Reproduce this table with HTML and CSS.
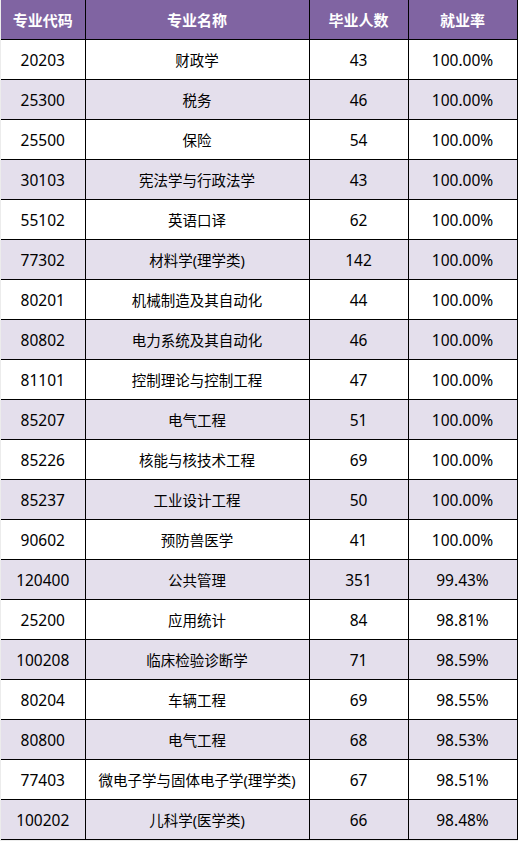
FILE: index.html
```html
<!DOCTYPE html>
<html lang="zh-CN">
<head>
<meta charset="utf-8">
<title>专业就业率</title>
<link rel="stylesheet" href="styles.css">
</head>
<body>
<table class="grid">
  <colgroup>
    <col class="c1"><col class="c2"><col class="c3"><col class="c4">
  </colgroup>
  <thead>
    <tr><th>专业代码</th><th>专业名称</th><th>毕业人数</th><th>就业率</th></tr>
  </thead>
  <tbody>
    <tr><td>20203</td><td>财政学</td><td>43</td><td>100.00%</td></tr>
    <tr><td>25300</td><td>税务</td><td>46</td><td>100.00%</td></tr>
    <tr><td>25500</td><td>保险</td><td>54</td><td>100.00%</td></tr>
    <tr><td>30103</td><td>宪法学与行政法学</td><td>43</td><td>100.00%</td></tr>
    <tr><td>55102</td><td>英语口译</td><td>62</td><td>100.00%</td></tr>
    <tr><td>77302</td><td>材料学(理学类)</td><td>142</td><td>100.00%</td></tr>
    <tr><td>80201</td><td>机械制造及其自动化</td><td>44</td><td>100.00%</td></tr>
    <tr><td>80802</td><td>电力系统及其自动化</td><td>46</td><td>100.00%</td></tr>
    <tr><td>81101</td><td>控制理论与控制工程</td><td>47</td><td>100.00%</td></tr>
    <tr><td>85207</td><td>电气工程</td><td>51</td><td>100.00%</td></tr>
    <tr><td>85226</td><td>核能与核技术工程</td><td>69</td><td>100.00%</td></tr>
    <tr><td>85237</td><td>工业设计工程</td><td>50</td><td>100.00%</td></tr>
    <tr><td>90602</td><td>预防兽医学</td><td>41</td><td>100.00%</td></tr>
    <tr><td>120400</td><td>公共管理</td><td>351</td><td>99.43%</td></tr>
    <tr><td>25200</td><td>应用统计</td><td>84</td><td>98.81%</td></tr>
    <tr><td>100208</td><td>临床检验诊断学</td><td>71</td><td>98.59%</td></tr>
    <tr><td>80204</td><td>车辆工程</td><td>69</td><td>98.55%</td></tr>
    <tr><td>80800</td><td>电气工程</td><td>68</td><td>98.53%</td></tr>
    <tr><td>77403</td><td>微电子学与固体电子学(理学类)</td><td>67</td><td>98.51%</td></tr>
    <tr><td>100202</td><td>儿科学(医学类)</td><td>66</td><td>98.48%</td></tr>
  </tbody>
</table>
</body>
</html>
```
FILE: styles.css
```css
html, body {
  margin: 0;
  padding: 0;
  background: #ececec;
}
body {
  padding: 0 0 0 1px;
  font-family: "Noto Sans", "Noto Sans CJK SC", sans-serif;
}
.grid {
  border-collapse: collapse;
  table-layout: fixed;
  width: 516px;
  font-size: 14.5px;
  color: #000;
}
.c1 { width: 84px; }
.c2 { width: 224px; }
.c3 { width: 99px; }
.c4 { width: 109px; }
.grid th, .grid td {
  height: 39px;
  padding: 0;
  text-align: center;
  vertical-align: middle;
  border: 1px solid #000;
  white-space: nowrap;
}
.grid tbody td:nth-child(1),
.grid tbody td:nth-child(3),
.grid tbody td:nth-child(4) {
  font-size: 15.5px;
}
.grid tr > :first-child { border-left: none; }
.grid thead th {
  border-top: none;
  background: #8064a2;
  color: #fff;
  font-weight: bold;
  font-size: 15px;
}
.grid tbody tr:nth-child(odd) td { background: #ffffff; }
.grid tbody tr:nth-child(even) td { background: #e4dfec; }
```
